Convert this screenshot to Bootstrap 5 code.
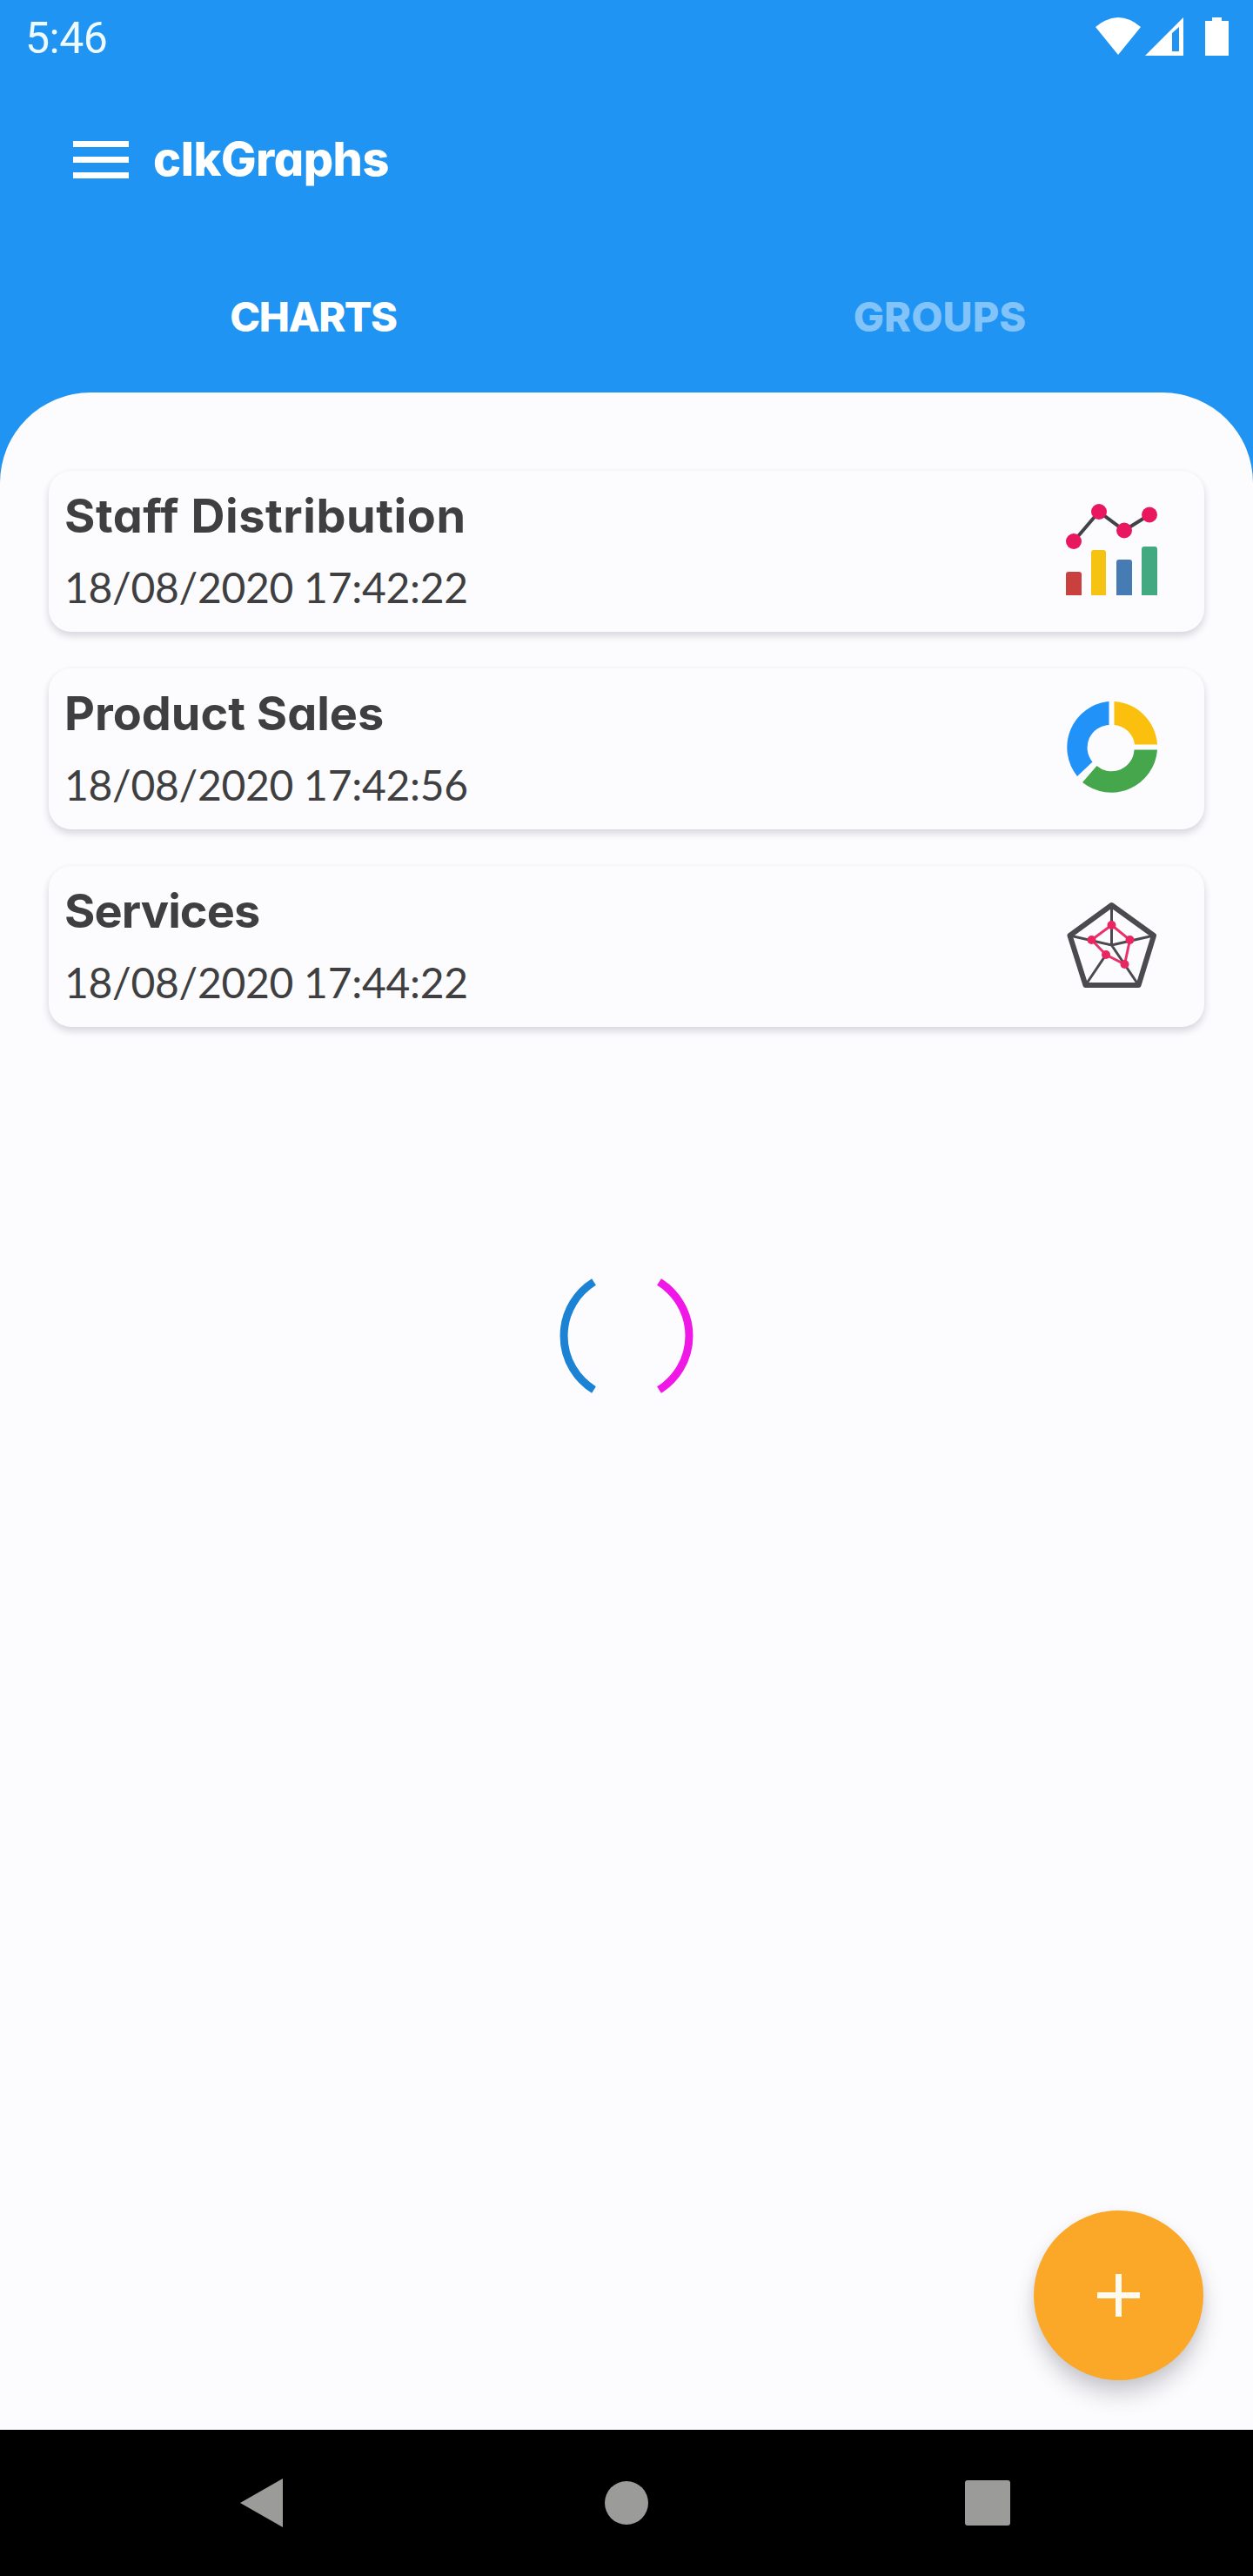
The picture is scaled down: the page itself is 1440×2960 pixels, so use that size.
<!DOCTYPE html>
<html lang="en">
<head>
<meta charset="utf-8">
<meta name="viewport" content="width=device-width, initial-scale=1">
<title>clkGraphs</title>
<link href="https://cdn.jsdelivr.net/npm/bootstrap@5.3.0/dist/css/bootstrap.min.css" rel="stylesheet">
<style>
  body { background: #2094f3; font-family: Inter, "Open Sans", sans-serif; font-feature-settings: "cv11" 1; color: #3f3f41; }
  .screen { height: 2960px; overflow: hidden; }
  .statusbar { height: 88px; padding: 0 28px 0 29px; font: 400 50px/88px Roboto, sans-serif; letter-spacing: -.5px; color: #effaff; }
  .statusbar svg { margin-top: -4px; }
  .appbar { height: 190px; padding: 0 84px; gap: 28px; }
  .brand { font-size: 54px; font-weight: 800; line-height: 64px; letter-spacing: -.5px; }
  .tabs { height: 173px; }
  .tabs .nav-link { color: #82c3fa; font-size: 47px; font-weight: 800; line-height: 56px; padding: 58px 0 0; }
  .tabs .nav-link.active { color: #fff; letter-spacing: -1.5px; }
  .sheet { background: #fcfcfe; border-radius: 104px 104px 0 0; padding: 90px 56px 0; }
  .entries { gap: 42px; }
  .entry { height: 185px; border: 0; border-radius: 26px; background: #fcfcfe; padding: 0 52px 0 18px;
           box-shadow: 0 5px 8px rgba(60,60,90,.14), 0 3px 7px 1px rgba(60,60,90,.06); }
  .entry h2 { margin: 20px 0 0; font-size: 54px; font-weight: 700; line-height: 64px; white-space: nowrap; }
  .entry .title-wide { letter-spacing: .55px; }
  .entry .title-tight { letter-spacing: -.9px; }
  .entry time { display: block; font: 400 48px/60px Lato, sans-serif; letter-spacing: -.3px; margin-top: 20px; white-space: nowrap; }
  .loader { left: 636px; top: 1000px; }
  .fab { width: 195px; height: 195px; right: 57px; bottom: 57px; background: #fba727; border: 0;
         box-shadow: 0 17px 24px rgba(60,60,75,.22), 0 5px 12px rgba(60,60,75,.08); }
  .sysnav { height: 168px; background: #000; }
</style>
</head>
<body>
<div class="screen d-flex flex-column">
  <div class="statusbar d-flex justify-content-between align-items-center">
    <span>5:46</span>
    <svg width="153" height="44" viewBox="1259 20 153 44" fill="#fff">
      <path d="M1259 31Q1285 9 1311 31L1285 63Z"/>
      <path fill-rule="evenodd" d="M1316 64L1360 20V64ZM1347 38V59H1355V31Z"/>
      <path d="M1393 20H1404V24H1412V64H1385V24H1393Z"/>
    </svg>
  </div>
  <header class="appbar d-flex align-items-center text-white">
    <svg width="64" height="43" viewBox="0 0 64 43" fill="#fff"><path d="M0 0H64V7H0ZM0 18H64V25H0ZM0 36H64V43H0Z"/></svg>
    <span class="brand">clkGraphs</span>
  </header>
  <nav class="tabs nav nav-justified flex-nowrap">
    <a class="nav-link active" href="#">CHARTS</a>
    <a class="nav-link" href="#">GROUPS</a>
  </nav>
  <main class="sheet flex-grow-1 position-relative">
    <div class="entries d-flex flex-column">
      <article class="entry card flex-row justify-content-between">
        <div><h2 class="title-wide">Staff Distribution</h2><time>18/08/2020 17:42:22</time></div>
        <svg width="108" height="185" viewBox="1225 541 108 185">
          <path d="M1235 622L1264 588L1293 609.5L1322 591.5" fill="none" stroke="#414348" stroke-width="4"/>
          <g fill="#e8175e"><circle cx="1235" cy="622" r="9"/><circle cx="1264" cy="588" r="9"/><circle cx="1293" cy="609.5" r="9"/><circle cx="1322" cy="591.5" r="9"/></g>
          <path fill="#c9403f" d="M1226 684V660q0-3 3-3h12q3 0 3 3v24z"/>
          <path fill="#f6c313" d="M1255 684V635q0-3 3-3h11q3 0 3 3v49z"/>
          <path fill="#467cb3" d="M1284 684V646q0-3 3-3h12q3 0 3 3v38z"/>
          <path fill="#42a980" d="M1313 684V631q0-3 3-3h12q3 0 3 3v53z"/>
        </svg>
      </article>
      <article class="entry card flex-row justify-content-between">
        <div><h2>Product Sales</h2><time>18/08/2020 17:42:56</time></div>
        <svg width="108" height="185" viewBox="1225 768 108 185">
          <path fill="#2192f7" d="M1275.500 806A53 53 0 0 0 1239 892L1256.500 875.500A26 26 0 0 1 1275.500 833Z"/>
          <path fill="#fbc00d" d="M1281.500 806A53 53 0 0 1 1331 855.500H1305A26 26 0 0 0 1281.500 833Z"/>
          <path fill="#46a64b" d="M1331 861.500A53 53 0 0 1 1245 899L1261.500 880A26 26 0 0 0 1304.500 861.500Z"/>
        </svg>
      </article>
      <article class="entry card flex-row justify-content-between">
        <div><h2 class="title-tight">Services</h2><time>18/08/2020 17:44:22</time></div>
        <svg width="108" height="185" viewBox="1225 995 108 185" fill="none">
          <path stroke="#4b4a4f" stroke-width="6" stroke-linejoin="round" d="M1278.500 1040L1327 1075L1309.500 1132H1248.500L1230.500 1075Z"/>
          <path stroke="#4b4a4f" stroke-width="3" d="M1278.500 1040V1086M1327 1075L1278.500 1086L1309.500 1132M1230.500 1075L1278.500 1086M1272 1097L1248.500 1132"/>
          <path stroke="#e8336a" stroke-width="3" d="M1278.500 1063L1299.500 1080L1293.500 1108L1272 1097L1255.500 1080Z"/>
          <g fill="#e92661"><circle cx="1278.500" cy="1063" r="5"/><circle cx="1299.500" cy="1080" r="5"/><circle cx="1293.500" cy="1108" r="5"/><circle cx="1272" cy="1097" r="5"/><circle cx="1255.500" cy="1080" r="5"/></g>
        </svg>
      </article>
    </div>
    <svg class="loader position-absolute" width="168" height="168" viewBox="0 0 168 168" fill="none" stroke-width="9" role="status">
      <path stroke="#1c83d4" d="M46.500 22A73 73 0 0 0 46.500 146"/>
      <path stroke="#f018e6" d="M121.500 22A73 73 0 0 1 121.500 146"/>
    </svg>
    <button class="fab btn rounded-circle position-absolute p-0 d-flex align-items-center justify-content-center" type="button" aria-label="Add">
      <svg width="49" height="49" viewBox="0 0 49 49" stroke="#fff9ee" stroke-width="7"><path d="M24.500 0V49M0 24.500H49"/></svg>
    </button>
  </main>
  <footer class="sysnav d-flex align-items-center">
    <svg width="1440" height="168" viewBox="0 2792 1440 168" fill="#9b9b99">
      <path d="M276 2876L325 2848V2904Z"/><circle cx="720" cy="2876" r="25"/><rect x="1109" y="2850" width="52" height="52" rx="3"/>
    </svg>
  </footer>
</div>
<script src="https://cdn.jsdelivr.net/npm/bootstrap@5.3.0/dist/js/bootstrap.bundle.min.js"></script>
</body>
</html>
